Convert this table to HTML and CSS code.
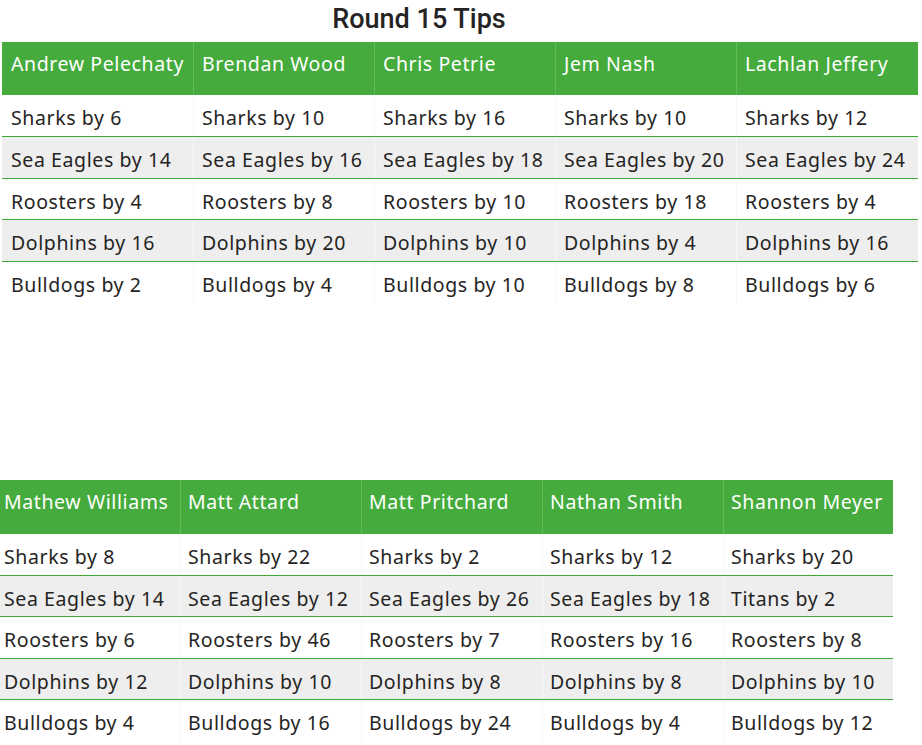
FILE: index.html
```html
<!DOCTYPE html>
<html>
<head>
<meta charset="utf-8">
<link rel="stylesheet" href="styles.css">
</head>
<body>
<div class="page">
  <h1 class="title">Round 15 Tips</h1>
  <div class="tips tips-a">
    <div class="row head"><div class="cell">Andrew Pelechaty</div><div class="cell">Brendan Wood</div><div class="cell">Chris Petrie</div><div class="cell">Jem Nash</div><div class="cell">Lachlan Jeffery</div></div>
    <div class="row"><div class="cell">Sharks by 6</div><div class="cell">Sharks by 10</div><div class="cell">Sharks by 16</div><div class="cell">Sharks by 10</div><div class="cell">Sharks by 12</div></div>
    <div class="sep"></div>
    <div class="row alt"><div class="cell">Sea Eagles by 14</div><div class="cell">Sea Eagles by 16</div><div class="cell">Sea Eagles by 18</div><div class="cell">Sea Eagles by 20</div><div class="cell">Sea Eagles by 24</div></div>
    <div class="sep"></div>
    <div class="row short"><div class="cell">Roosters by 4</div><div class="cell">Roosters by 8</div><div class="cell">Roosters by 10</div><div class="cell">Roosters by 18</div><div class="cell">Roosters by 4</div></div>
    <div class="sep"></div>
    <div class="row alt"><div class="cell">Dolphins by 16</div><div class="cell">Dolphins by 20</div><div class="cell">Dolphins by 10</div><div class="cell">Dolphins by 4</div><div class="cell">Dolphins by 16</div></div>
    <div class="sep"></div>
    <div class="row last"><div class="cell">Bulldogs by 2</div><div class="cell">Bulldogs by 4</div><div class="cell">Bulldogs by 10</div><div class="cell">Bulldogs by 8</div><div class="cell">Bulldogs by 6</div></div>
  </div>
  <div class="tips tips-b">
    <div class="row head"><div class="cell">Mathew Williams</div><div class="cell">Matt Attard</div><div class="cell">Matt Pritchard</div><div class="cell">Nathan Smith</div><div class="cell">Shannon Meyer</div></div>
    <div class="row"><div class="cell">Sharks by 8</div><div class="cell">Sharks by 22</div><div class="cell">Sharks by 2</div><div class="cell">Sharks by 12</div><div class="cell">Sharks by 20</div></div>
    <div class="sep"></div>
    <div class="row alt short"><div class="cell">Sea Eagles by 14</div><div class="cell">Sea Eagles by 12</div><div class="cell">Sea Eagles by 26</div><div class="cell">Sea Eagles by 18</div><div class="cell">Titans by 2</div></div>
    <div class="sep"></div>
    <div class="row"><div class="cell">Roosters by 6</div><div class="cell">Roosters by 46</div><div class="cell">Roosters by 7</div><div class="cell">Roosters by 16</div><div class="cell">Roosters by 8</div></div>
    <div class="sep"></div>
    <div class="row alt short"><div class="cell">Dolphins by 12</div><div class="cell">Dolphins by 10</div><div class="cell">Dolphins by 8</div><div class="cell">Dolphins by 8</div><div class="cell">Dolphins by 10</div></div>
    <div class="sep"></div>
    <div class="row last"><div class="cell">Bulldogs by 4</div><div class="cell">Bulldogs by 16</div><div class="cell">Bulldogs by 24</div><div class="cell">Bulldogs by 4</div><div class="cell">Bulldogs by 12</div></div>
  </div>
</div>
</body>
</html>
```
FILE: styles.css
```css
html, body {
  margin: 0;
  padding: 0;
  background: #ffffff;
}
.page {
  width: 922px;
  height: 745px;
  overflow: hidden;
  display: flex;
  flex-direction: column;
}
.title {
  margin: 0;
  height: 42px;
  flex: none;
  text-align: center;
  font-family: Roboto, "Liberation Sans", sans-serif;
  font-weight: 500;
  font-size: 27px;
  line-height: 38px;
  color: #252423;
  padding-right: 84px;
}
.tips {
  flex: none;
  display: flex;
  flex-direction: column;
  font-family: "Noto Sans", "Open Sans", sans-serif;
  font-size: 19.5px;
  letter-spacing: 0.6px;
  line-height: 26px;
  color: #252423;
}
.tips-a {
  margin-left: 2px;
  width: 916px;
  --cols: 191px 181px 181px 181px 182px;
}
.tips-b {
  margin-top: 176px;
  width: 893px;
  --cols: 180px 181px 181px 181px 170px;
}
.row {
  display: grid;
  grid-template-columns: var(--cols);
  height: 41px;
  flex: none;
}
.row.short {
  height: 40px;
}
.row.last {
  height: 42px;
}
.sep {
  flex: none;
  height: 1px;
  background: #3fa936;
}
.row.alt {
  background: #eeeeee;
}
.row.head {
  height: 53px;
  background: #44ab3c;
  color: #ffffff;
}
.tips-b .row.head {
  height: 54px;
}
.cell {
  padding: 10px 0 0 9px;
  white-space: nowrap;
  overflow: hidden;
  border-left: 1px solid #f7f7f7;
}
.row.alt .cell {
  border-left-color: #f8f8f8;
}
.row.head .cell {
  padding-top: 9px;
  border-left-color: #62ba5b;
}
.cell:first-child,
.row.head .cell:first-child {
  border-left: none;
}
.tips-a .cell + .cell {
  padding-left: 8px;
}
.tips-b .cell {
  padding-left: 7px;
}
.tips-b .cell:first-child {
  padding-left: 4px;
}
```
